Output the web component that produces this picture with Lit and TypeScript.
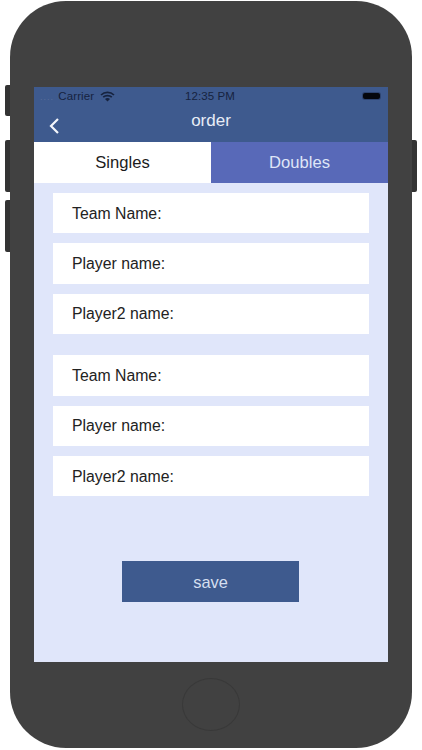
import { LitElement, html, css, svg } from "lit";
import { customElement } from "lit/decorators.js";

const GROUPS = [
  ["Team Name:", "Player name:", "Player2 name:"],
  ["Team Name:", "Player name:", "Player2 name:"],
];

@customElement("app-root")
export class AppRoot extends LitElement {
  static styles = css`
    :host { display: block; width: 422px; height: 750px; background: #fff; overflow: hidden;
      font-family: "Liberation Sans", Arial, sans-serif; }
    .stage { position: relative; width: 422px; height: 750px; padding: 1px 10px 2px; box-sizing: border-box; }
    .side { position: absolute; width: 6px; background: #333; }
    .left { left: 5px; border-radius: 2px 0 0 2px; }
    .right { left: 412px; width: 5px; border-radius: 0 2px 2px 0; top: 140px; height: 52px; }
    .b1 { top: 85px; height: 31px; }
    .b2 { top: 140px; height: 52px; }
    .b3 { top: 200px; height: 52px; }
    .phone { position: relative; height: 100%; background: #414141; border-radius: 56px;
      padding: 86px 24px 0; box-sizing: border-box; display: flex; flex-direction: column; align-items: center; }
    .screen { width: 354px; height: 575px; background: #e0e6fa; display: flex; flex-direction: column; align-self: stretch; flex: none; }
    .header { height: 55px; background: #3e5a8e; color: #e8edf6; flex: none; display: flex; flex-direction: column; }
    .status { height: 18px; padding: 0 8px 0 6px; display: grid; grid-template-columns: 1fr auto 1fr; align-items: center;
      font-size: 11.5px; letter-spacing: 0.1px; color: #16233f; }
    .carrier { display: flex; align-items: center; gap: 6px; }
    .dots { color: #5a6f9a; font-size: 9px; letter-spacing: 1px; margin-right: 1px; }
    .battery { justify-self: end; width: 17px; height: 6px; border-radius: 2px; background: #05070d; box-shadow: 0 0 0 1px #2e4470; }
    .nav { position: relative; flex: 1; display: flex; justify-content: center; }
    .title { font-size: 17px; line-height: 18px; margin-top: 7px; }
    .back { position: absolute; left: 14px; top: 12px; width: 12px; height: 18px; }
    .tabs { display: flex; height: 41px; flex: none; }
    .tab { flex: 1; display: flex; align-items: center; justify-content: center; padding-top: 1px; box-sizing: border-box; font-size: 16.6px; background: #fff; color: #1c1c1c; }
    .tab.on { background: #5869b8; color: #dfe5f7; }
    .form { padding: 10px 19px 0; display: flex; flex-direction: column; gap: 21px; }
    .group { display: flex; flex-direction: column; gap: 10px; }
    .row { height: 40.4px; background: #fff; display: flex; align-items: center; padding: 1px 0 0 19px; box-sizing: border-box; font-size: 15.8px; color: #222; }
    .save { align-self: center; margin-top: 65px; margin-right: 1px; width: 177px; height: 41px; padding-top: 1px; box-sizing: border-box; background: #3e5a8e; color: #d5dff0;
      font-size: 16.4px; display: flex; align-items: center; justify-content: center; }
    .home { margin-top: 16px; width: 58px; height: 53px; border-radius: 50%; border: 1.5px solid #393939; box-sizing: border-box; flex: none; }
  `;

  render() {
    return html`<div class="stage">
      <div class="side left b1"></div>
      <div class="side left b2"></div>
      <div class="side left b3"></div>
      <div class="side right"></div>
      <div class="phone">
        <div class="screen">
          <div class="header">
            <div class="status">
              <div class="carrier">
                <span><span class="dots">....</span> Carrier</span>
                <svg width="15" height="11" viewBox="0 0 15 11">
                  ${svg`<path d="M1 4 A9.5 9.5 0 0 1 14 4 M3.2 6.2 A6.4 6.4 0 0 1 11.8 6.2" fill="none" stroke="#16233f" stroke-width="1.7"/>
                  <path d="M5 8 A3.4 3.4 0 0 1 10 8 L7.5 10.6 Z" fill="#16233f"/>`}
                </svg>
              </div>
              <span>12:35 PM</span>
              <div class="battery"></div>
            </div>
            <div class="nav">
              <svg class="back" viewBox="0 0 12 18">
                ${svg`<path d="M10 2 L3 9 L10 16" fill="none" stroke="#f4f6fb" stroke-width="2.2"/>`}
              </svg>
              <span class="title">order</span>
            </div>
          </div>
          <div class="tabs">
            <div class="tab">Singles</div>
            <div class="tab on">Doubles</div>
          </div>
          <div class="form">
            ${GROUPS.map(g => html`<div class="group">
              ${g.map(t => html`<div class="row">${t}</div>`)}
            </div>`)}
          </div>
          <div class="save">save</div>
        </div>
        <div class="home"></div>
      </div>
    </div>`;
  }
}
